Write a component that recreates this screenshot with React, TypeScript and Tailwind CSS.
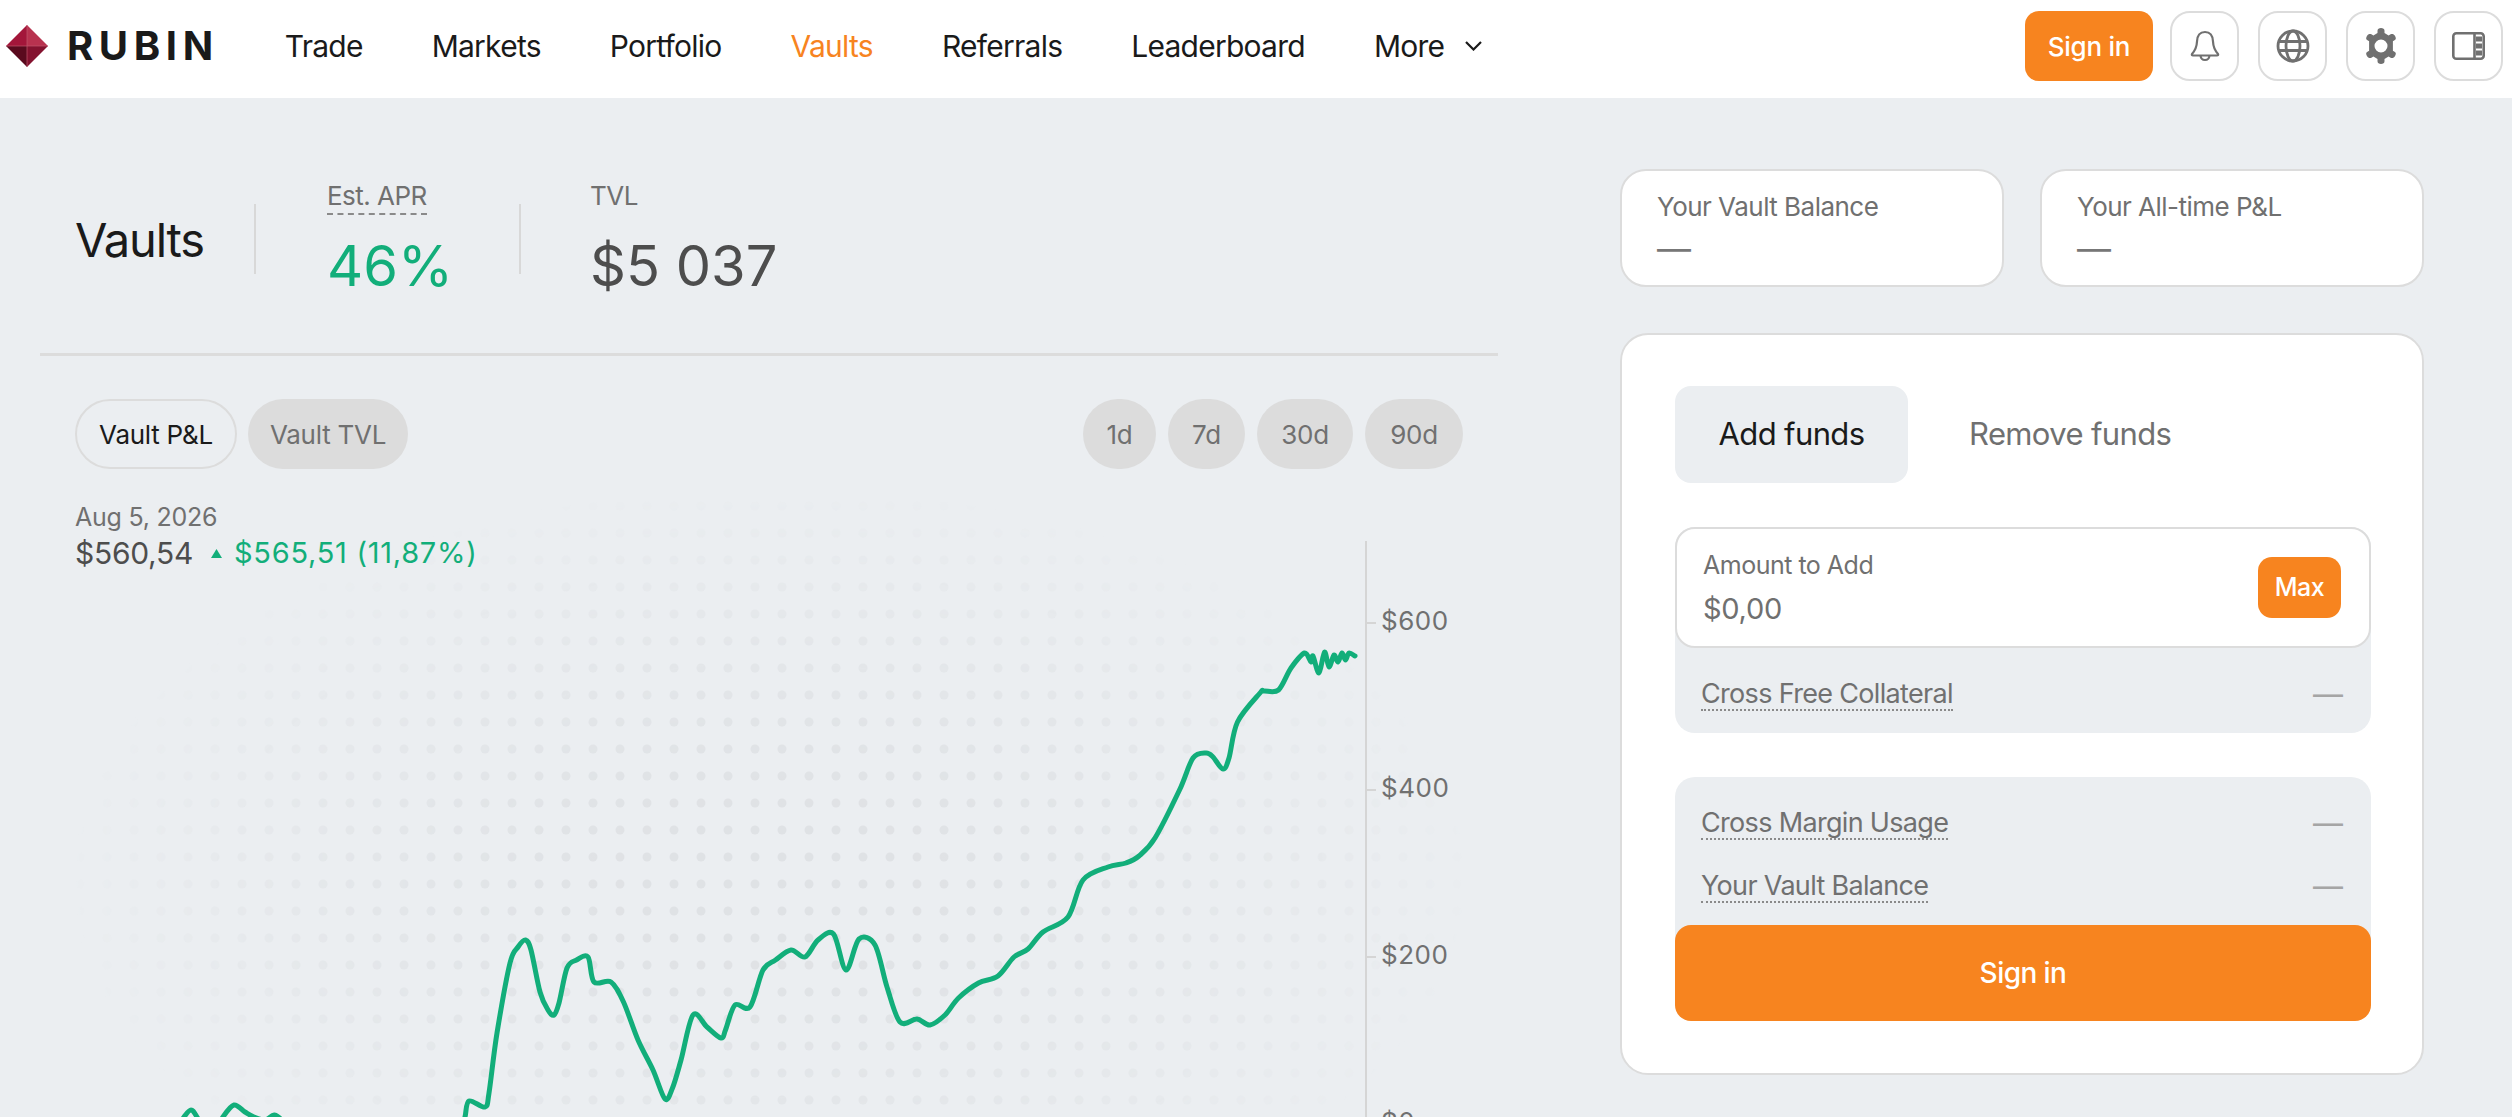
import React from "react";

const LINE: [number, number][] = [
  [150,1160],[172,1135],[184,1117],[191,1110],[197,1117],[210,1140],[223,1117],[234,1105],[245,1112],[254,1117],[265,1120],[274,1115],[282,1120],[320,1150],[420,1150],[460,1135],[465,1117],[469,1101],[485,1107],[489,1093],
  [497,1033],[510,963],[518,947],[525.5,940],[531,950],[540,992],[548,1010],[554,1015],[559,1003],[567,968],[576.5,960],[588,957],[594,982],[611,982],[623.5,1002],[638,1040],[653,1070],[665,1099],[672.5,1088],[681,1060],[693,1015],[707,1027],[721,1038],[725.5,1030],[735,1005],[750,1007],[763,970],[775.5,960],[791,950],[805,957],
  [818,940],[833.5,934],[846,970],[859,939],[875,945],[887,987],[900,1022],[917,1019],[930,1025],[945,1015],[958.5,998],[978.5,983],[998,976],[1014,957],[1028,949],[1043,932],[1068,917],[1083,880],[1108,867],[1126,863],[1139,856],[1155,838],[1179.5,790],[1193,758],[1206,753],[1213,757],[1223,769],[1229,758],
  [1237.5,722],[1260,693],[1264,691],[1278.5,690],[1291,668],[1304.5,653],[1311,662],[1313,656],[1319,673],[1324.5,652],[1329,667],[1334,655],[1338,662],[1342,653],[1345.5,660],[1349,653],[1355,656],
];

function smooth(pts: [number, number][]) {
  let d = `M${pts[0][0]} ${pts[0][1]}`;
  for (let i = 0; i < pts.length - 1; i++) {
    const p0 = pts[Math.max(0, i - 1)];
    const p1 = pts[i];
    const p2 = pts[i + 1];
    const p3 = pts[Math.min(pts.length - 1, i + 2)];
    const t = 0.16;
    d += ` C${(p1[0] + (p2[0] - p0[0]) * t).toFixed(1)} ${(p1[1] + (p2[1] - p0[1]) * t).toFixed(1)} ${(p2[0] - (p3[0] - p1[0]) * t).toFixed(1)} ${(p2[1] - (p3[1] - p1[1]) * t).toFixed(1)} ${p2[0]} ${p2[1]}`;
  }
  return d;
}

function Logo() {
  return (
    <svg width="42" height="42" viewBox="0 0 42 42" className="shrink-0">
      <polygon points="21,0 21,21 0,21" fill="#a3163a" />
      <polygon points="21,0 42,21 21,21" fill="#b8324f" />
      <polygon points="0,21 21,21 21,42" fill="#5a0a1e" />
      <polygon points="21,21 42,21 21,42" fill="#84122f" />
      <path d="M21 0V42M0 21H42" stroke="#c0586e" strokeWidth="0.7" />
    </svg>
  );
}

function IconButton({ children }: { children: React.ReactNode }) {
  return (
    <button className="w-[69px] h-[70px] rounded-[20px] border-2 border-[#dcdcdc] bg-white flex items-center justify-center">
      {children}
    </button>
  );
}

function Bell() {
  return (
    <svg width="30" height="32" viewBox="0 0 30 32" fill="none" stroke="#707070" strokeWidth="2.2" strokeLinejoin="round">
      <path d="M15 2C9.5 2 7.2 6.5 7 11.5C6.8 17 5.5 20 2 24C1.5 25 2 25.5 3 25.5H27C28 25.5 28.5 25 28 24C24.5 20 23.2 17 23 11.5C22.8 6.5 20.5 2 15 2Z" />
      <path d="M10.5 25.5C10.8 28.5 12.6 30 15 30C17.4 30 19.2 28.5 19.5 25.5" />
    </svg>
  );
}

function Globe() {
  return (
    <svg width="34" height="34" viewBox="0 0 34 34" fill="none" stroke="#707070" strokeWidth="2.8">
      <circle cx="17" cy="17" r="15" />
      <ellipse cx="17" cy="17" rx="7" ry="15" />
      <path d="M2.5 12.5H31.5M2.5 21.5H31.5" />
    </svg>
  );
}

function Gear() {
  return (
    <svg width="34" height="36" viewBox="0 0 34 36">
      <path
        fillRule="evenodd"
        fill="#707070"
        d="M13.5 2.8C13.5 1 15 0 17 0C19 0 20.5 1 20.5 2.8V5L24.6 7.4L26.6 6.3C28.2 5.4 29.9 6 30.9 7.7C31.9 9.4 32.4 11.1 30.9 12L28.9 13.2V22.8L30.9 24C32.4 24.9 31.9 26.6 30.9 28.3C29.9 30 28.2 30.6 26.6 29.7L24.6 28.6L20.5 31V33.2C20.5 35 19 36 17 36C15 36 13.5 35 13.5 33.2V31L9.4 28.6L7.4 29.7C5.8 30.6 4.1 30 3.1 28.3C2.1 26.6 1.6 24.9 3.1 24L5.1 22.8V13.2L3.1 12C1.6 11.1 2.1 9.4 3.1 7.7C4.1 6 5.8 5.4 7.4 6.3L9.4 7.4L13.5 5V2.8ZM17 11.5A6.5 6.5 0 1 0 17 24.5A6.5 6.5 0 1 0 17 11.5Z"
      />
    </svg>
  );
}

function PanelIcon() {
  return (
    <svg width="33" height="28" viewBox="0 0 33 28" fill="none">
      <rect x="1.3" y="1.3" width="30.4" height="25.4" rx="3" stroke="#707070" strokeWidth="2.6" />
      <path d="M22.5 1.3V26.7" stroke="#707070" strokeWidth="2.6" />
      <rect x="24" y="4.5" width="6" height="5" fill="#707070" />
      <rect x="24" y="11.5" width="6" height="5" fill="#707070" />
      <rect x="24" y="18.5" width="6" height="5" fill="#707070" />
    </svg>
  );
}

function Header() {
  const items = ["Trade", "Markets", "Portfolio", "Vaults", "Referrals", "Leaderboard"];
  return (
    <header className="h-[98px] bg-white flex items-center pl-[6px] pr-[9px] pb-[6px] shrink-0">
      <Logo />
      <span className="ml-[19px] text-[40px] leading-none font-bold tracking-[0.14em] text-[#1a1a1a]">RUBIN</span>
      <nav className="ml-[66px] flex items-center gap-[69px] text-[30px] tracking-[-0.025em] text-[#1a1a1a]">
        {items.map((n) => (
          <a key={n} className={n === "Vaults" ? "text-[#f7841f]" : ""}>{n}</a>
        ))}
        <a className="flex items-center gap-[21px]">
          More
          <svg width="17" height="10" viewBox="0 0 17 10" fill="none" stroke="#1a1a1a" strokeWidth="2.2">
            <path d="M1 1L8.5 8.5L16 1" />
          </svg>
        </a>
      </nav>
      <div className="ml-auto flex items-center gap-[19px]">
        <button className="w-[128px] h-[70px] rounded-[14px] bg-[#f7841f] text-white text-[26px] font-medium tracking-[-0.01em] -mr-[2px]">Sign in</button>
        <IconButton><Bell /></IconButton>
        <IconButton><Globe /></IconButton>
        <IconButton><Gear /></IconButton>
        <IconButton><PanelIcon /></IconButton>
      </div>
    </header>
  );
}

function Chart() {
  return (
    <div className="relative h-[617px] w-[1460px]">
      <svg width="1460" height="617" viewBox="40 500 1460 617" className="block">
        <defs>
          <pattern id="dots" x="26" y="20" width="27" height="27" patternUnits="userSpaceOnUse">
            <circle cx="0" cy="0" r="4.5" fill="#dfe2e5" />
            <circle cx="27" cy="0" r="4.5" fill="#dfe2e5" />
            <circle cx="0" cy="27" r="4.5" fill="#dfe2e5" />
            <circle cx="27" cy="27" r="4.5" fill="#dfe2e5" />
          </pattern>
          <radialGradient id="fade" gradientUnits="userSpaceOnUse" cx="0" cy="0" r="1" gradientTransform="translate(770 880) scale(700 395)">
            <stop offset="0" stopColor="#fff" />
            <stop offset="0.3" stopColor="#fff" stopOpacity="0.98" />
            <stop offset="0.65" stopColor="#fff" stopOpacity="0.55" />
            <stop offset="1" stopColor="#fff" stopOpacity="0" />
          </radialGradient>
          <mask id="dotmask" maskUnits="userSpaceOnUse" x="40" y="500" width="1460" height="617">
            <rect x="40" y="500" width="1460" height="617" fill="url(#fade)" />
          </mask>
        </defs>
        <rect x="40" y="500" width="1460" height="617" fill="url(#dots)" mask="url(#dotmask)" />
        <path d="M1366 541V1117" stroke="#d5d5d5" strokeWidth="2" />
        {[623, 790, 957, 1124].map((y) => (
          <path key={y} d={`M1366 ${y}H1376`} stroke="#d5d5d5" strokeWidth="2" />
        ))}
        {[["$600", 630], ["$400", 797], ["$200", 964], ["$0", 1131]].map(([t, y]) => (
          <text key={t as string} x="1381" y={y as number} fontSize="26" fill="#707070" letterSpacing="0.5">{t}</text>
        ))}
        <path d={smooth(LINE)} fill="none" stroke="#12ae7a" strokeWidth="5" strokeLinejoin="round" strokeLinecap="round" />
      </svg>
      <div className="absolute left-[35px] top-[2px]">
        <div className="text-[25px] leading-[30px] text-[#707070] tracking-[-0.01em]">Aug 5, 2026</div>
        <div className="flex items-center mt-[4px] leading-[34px]">
          <span className="text-[30px] text-[#4d4d4d] tracking-[-0.01em]">$560,54</span>
          <svg width="11" height="9" viewBox="0 0 11 9" className="ml-[18px]"><path d="M5.5 0L11 9H0Z" fill="#12ae7a" /></svg>
          <span className="ml-[12px] text-[29px] text-[#12ae7a] tracking-[0.025em]">$565,51 (11,87%)</span>
        </div>
      </div>
    </div>
  );
}

function Pill({ children, active, w }: { children: React.ReactNode; active?: boolean; w: string }) {
  return (
    <div className={`${w} h-[70px] rounded-full flex items-center justify-center text-[26px] tracking-[-0.01em] ${active ? "border-2 border-[#dcdcdc] text-[#1a1a1a]" : "bg-[#dcdcdc] text-[#707070]"}`}>
      {children}
    </div>
  );
}

function Left() {
  return (
    <div className="w-[1458px] ml-[40px] shrink-0">
      <div className="h-[258px] border-b-[3px] border-[#dcdcdc] px-[35px] flex items-start">
        <div className="mt-[106px] w-[181px] h-[70px] border-r-2 border-[#d8d8d8] flex items-center">
          <span className="text-[47px] leading-none tracking-[-0.025em] text-[#1a1a1a]">Vaults</span>
        </div>
        <div className="w-[263px] pl-[71px] mt-[81px]">
          <span className="block w-fit text-[26px] leading-[34px] tracking-[-0.02em] text-[#707070] border-b-2 border-dashed border-[#8a8a8a]">Est. APR</span>
          <div className="mt-[21px] text-[56px] leading-[60px] text-[#12ae7a]">46%</div>
        </div>
        <div className="mt-[106px] h-[70px] w-[2px] bg-[#d8d8d8]"></div>
        <div className="mt-[81px] ml-[69px]">
          <span className="block text-[26px] leading-[34px] tracking-[-0.02em] text-[#707070]">TVL</span>
          <div className="mt-[23px] text-[56px] leading-[60px] text-[#4d4d4d]">$5 037</div>
        </div>
      </div>
      <div className="mt-[43px] px-[35px] flex items-center justify-between">
        <div className="flex gap-[11px]">
          <Pill active w="w-[162px]">Vault P&amp;L</Pill>
          <Pill w="w-[160px]">Vault TVL</Pill>
        </div>
        <div className="flex gap-[12px]">
          <Pill w="w-[73px]">1d</Pill>
          <Pill w="w-[77px]">7d</Pill>
          <Pill w="w-[96px]">30d</Pill>
          <Pill w="w-[98px]">90d</Pill>
        </div>
      </div>
      <div className="mt-[31px]">
        <Chart />
      </div>
    </div>
  );
}

function Stat({ label }: { label: string }) {
  return (
    <div className="w-[384px] h-[118px] rounded-[26px] border-2 border-[#dcdcdc] bg-white pl-[35px] pt-[18px]">
      <div className="text-[26px] leading-[36px] tracking-[-0.02em] text-[#707070]">{label}</div>
      <div className="mt-[5px] text-[34px] leading-[38px] text-[#777777]">—</div>
    </div>
  );
}

function Row({ label }: { label: string }) {
  return (
    <div className="flex items-start justify-between">
      <span className="text-[27px] leading-[30px] tracking-[-0.025em] text-[#707070] border-b-2 border-dotted border-[#8a8a8a]">{label}</span>
      <span className="text-[30px] leading-[30px] text-[#a5a5a5]">—</span>
    </div>
  );
}

function Right() {
  return (
    <div className="w-[804px] ml-[122px] shrink-0 pt-[71px]">
      <div className="flex justify-between">
        <Stat label="Your Vault Balance" />
        <Stat label="Your All-time P&L" />
      </div>
      <div className="mt-[46px] h-[742px] rounded-[28px] border-2 border-[#dcdcdc] bg-white pl-[53px] pr-[51px] pt-[51px]">
        <div className="flex items-center">
          <div className="w-[233px] h-[97px] rounded-[16px] bg-[#ebeef1] flex items-center justify-center text-[31px] tracking-[-0.02em] text-[#1a1a1a]">Add funds</div>
          <div className="ml-[61px] text-[31px] tracking-[-0.02em] text-[#707070]">Remove funds</div>
        </div>
        <div className="mt-[44px] rounded-[20px] bg-[#ebeef1]">
          <div className="h-[121px] rounded-[20px] border-2 border-[#dcdcdc] bg-white pl-[26px] pr-[28px] flex items-center justify-between">
            <div>
              <div className="text-[25px] leading-[30px] tracking-[-0.02em] text-[#707070]">Amount to Add</div>
              <div className="mt-[12px] text-[29px] leading-[34px] tracking-[-0.01em] text-[#707070]">$0,00</div>
            </div>
            <button className="w-[83px] h-[61px] rounded-[14px] bg-[#f7841f] text-white text-[25px] font-medium tracking-[-0.02em]">Max</button>
          </div>
          <div className="h-[85px] pl-[26px] pr-[28px] pt-[31px]">
            <Row label="Cross Free Collateral" />
          </div>
        </div>
        <div className="mt-[44px] rounded-[20px] bg-[#ebeef1]">
          <div className="h-[148px] pl-[26px] pr-[28px] pt-[31px] flex flex-col gap-[31px]">
            <Row label="Cross Margin Usage" />
            <Row label="Your Vault Balance" />
          </div>
          <button className="w-full h-[96px] rounded-[16px] bg-[#f7841f] text-white text-[28px] font-medium tracking-[-0.02em]">Sign in</button>
        </div>
      </div>
    </div>
  );
}

export default function App() {
  return (
    <div className="w-[2512px] h-[1117px] overflow-hidden bg-[#ebeef1] flex flex-col [font-family:Inter,sans-serif]">
      <Header />
      <main className="flex flex-1 min-h-0">
        <Left />
        <Right />
      </main>
    </div>
  );
}
